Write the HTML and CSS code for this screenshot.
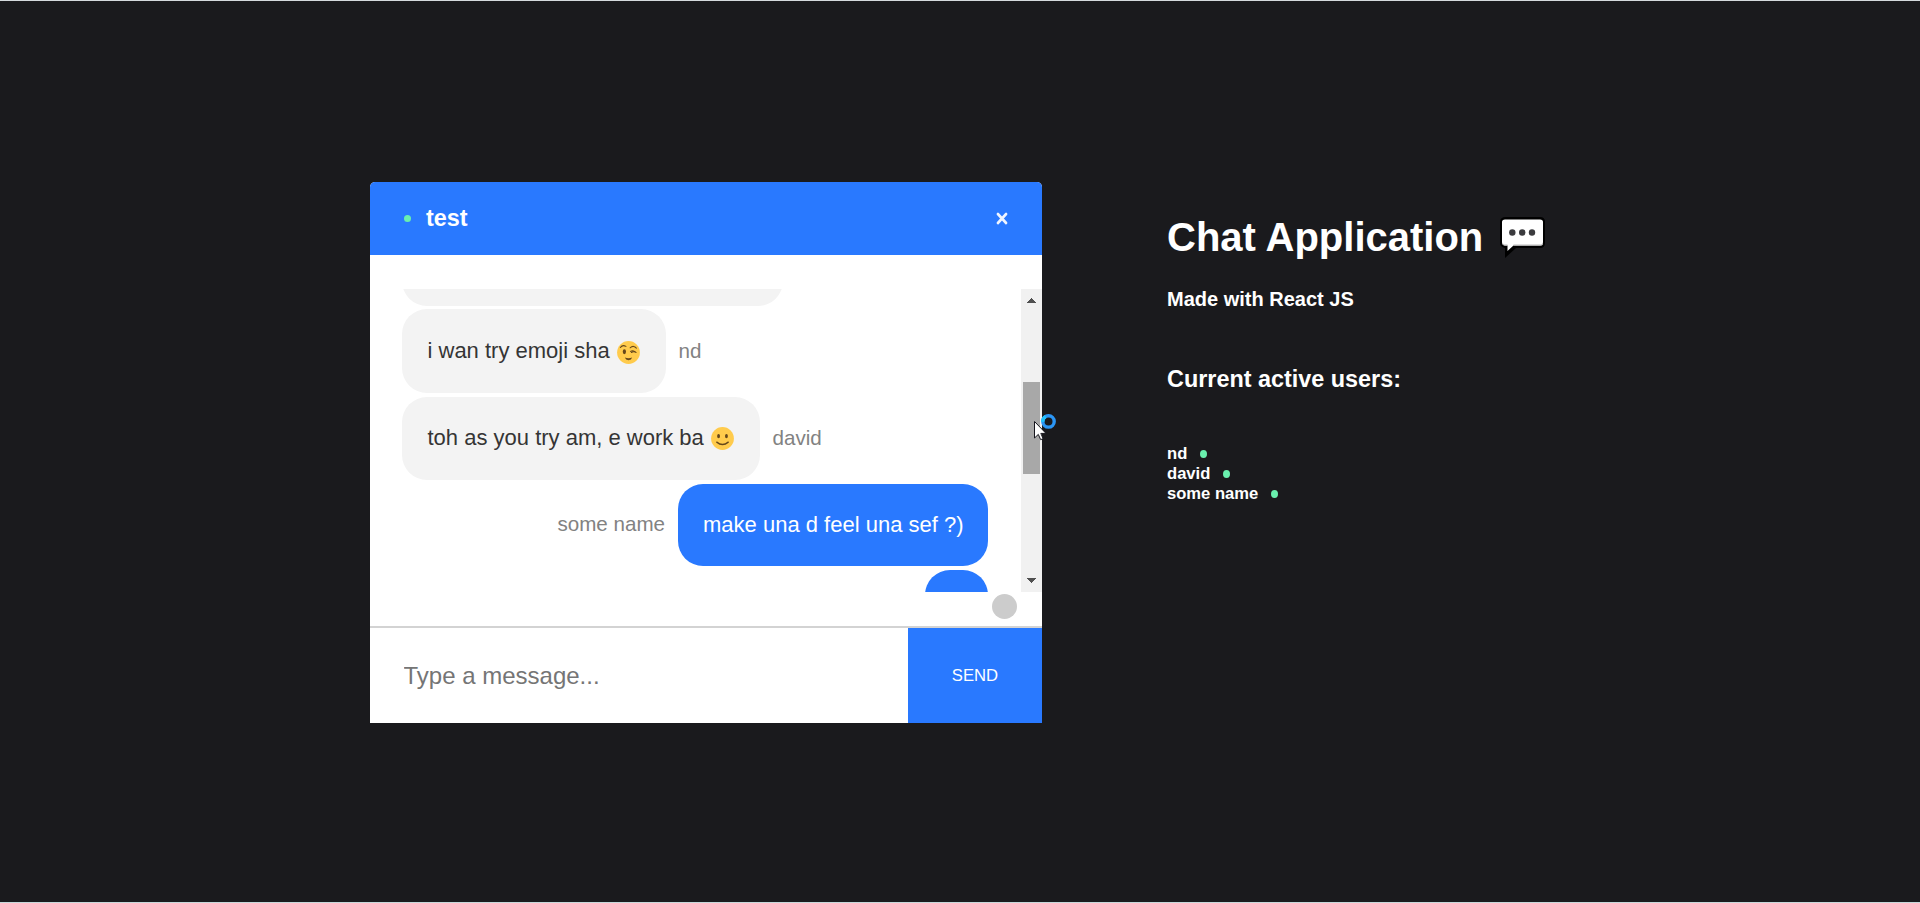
FILE: index.html
```html
<!DOCTYPE html>
<html lang="en">
<head>
<meta charset="utf-8">
<title>Chat Application</title>
<link rel="stylesheet" href="styles.css">
</head>
<body>
<main class="page">
  <section class="chat">
    <header class="bar">
      <i class="dot"></i>
      <h3 class="room">test</h3>
      <svg class="close" width="12" height="13" viewBox="0 0 12 13"><path d="M1.9 2 10.1 11M10.1 2 1.9 11" stroke="#fff" stroke-width="2.6" stroke-linecap="round" opacity=".93"/></svg>
    </header>
    <div class="messages">
      <div class="list">
        <div class="row clipped-top"><div class="bubble first"></div></div>
        <div class="row"><div class="bubble tall"><span>i wan try emoji sha</span>
          <svg class="emoji" viewBox="0 0 24 24"><circle cx="12" cy="12" r="11.9" fill="#ffcb4c"/><ellipse cx="7.7" cy="11.2" rx="1.7" ry="2.5" fill="#65471b"/><path d="M3.5 6.8C5 4.7 7 4.3 9.3 5.6M13.7 7.1C16 4.9 18.6 5.3 20.2 7.4M14 10.8C16 9.8 18.8 10.2 19.9 12M15 12Q17 10.8 19 11.6" fill="none" stroke="#65471b" stroke-width="1.1" stroke-linecap="round"/><path d="M8.2 17.3Q12 18.7 15.8 17.3Q15 19.9 12 20Q9 19.9 8.2 17.3Z" fill="#65471b"/></svg></div><span class="name">nd</span></div>
        <div class="row"><div class="bubble mid"><span>toh as you try am, e work ba</span>
          <svg class="emoji" viewBox="0 0 24 24"><circle cx="12" cy="12" r="11.9" fill="#ffcb4c"/><ellipse cx="7.9" cy="9.5" rx="1.5" ry="2.3" fill="#65471b"/><ellipse cx="16.1" cy="9.5" rx="1.5" ry="2.3" fill="#65471b"/><path d="M6 15.8Q12 20.7 18 15.8" fill="none" stroke="#65471b" stroke-width="1.4" stroke-linecap="round"/></svg></div><span class="name raised">david</span></div>
        <div class="row own"><span class="name">some name</span><div class="bubble mine">make una d feel una sef ?)</div></div>
        <div class="row own"><div class="bubble mine last"></div></div>
      </div>
      <div class="scrollbar">
        <svg width="21" height="21"><path d="M10 9h1v1h1v1h1v1h1v1h1v1H6v-1h1v-1h1v-1h1v-1h1z" fill="#505050"/></svg>
        <div class="thumb"></div>
        <svg width="21" height="21"><path d="M6 7h9v1h-1v1h-1v1h-1v1h-1v1h-1v-1H9v-1H8V9H7V8H6z" fill="#505050"/></svg>
      </div>
    </div>
    <div class="status"><i class="spot"></i></div>
    <form class="compose">
      <input class="field" type="text" placeholder="Type a message...">
      <button class="send" type="button">SEND</button>
    </form>
    <svg class="cursor" width="24" height="28" viewBox="0 0 24 28"><circle cx="14.5" cy="8.4" r="5.7" fill="none" stroke="#2b96f5" stroke-width="3.4"/><path d="M8.8 8.9A5.7 5.7 0 0 1 11.6 3.5" fill="none" stroke="#22c3ff" stroke-width="3.4"/><path d="M.5 8.5V25L4.3 21.4 6.7 26.7 9.1 25.6 6.8 20.4H12Z" fill="#fff" stroke="#16161d"/></svg>
  </section>
  <aside class="info">
    <h1 class="title"><span>Chat Application</span>
      <svg class="speech" width="47" height="43" viewBox="0 0 47 43"><path d="M7 1H41Q46 1 46 6V27Q46 32 41 32H17L6 42V32Q1 31 1 27V6Q1 1 7 1Z" fill="#000"/><path d="M6 3.5H41Q44 3.5 44 6V26Q44 29.5 41 29.5H14.5L8.5 35V29.5H6Q3 29.5 3 26V6Q3 3.5 6 3.5Z" fill="#fff"/><path d="M4 28Q4.8 29.2 6 29.2H8.5M14.5 29.2H41Q43 29.2 43.6 28" fill="none" stroke="#bbb" stroke-width="1.2"/><g fill="#3b3b3e"><circle cx="13.3" cy="16.5" r="3.2"/><circle cx="23.2" cy="16.5" r="3.2"/><circle cx="33" cy="16.5" r="3.2"/></g></svg>
    </h1>
    <h2 class="subtitle">Made with React JS</h2>
    <h3 class="heading">Current active users:</h3>
    <ul class="users">
      <li>nd<i class="dot"></i></li>
      <li>david<i class="dot"></i></li>
      <li>some name<i class="dot"></i></li>
    </ul>
  </aside>
</main>
</body>
</html>
```

FILE: styles.css
```css
* { box-sizing: border-box; }
body { margin: 0; font-family: "Liberation Sans", Arial, sans-serif; }
h1, h2, h3, ul { margin: 0; padding: 0; }
.page { display: flex; align-items: flex-start; height: 903px; padding: 181px 0 0 370px; background: #1a1a1d; border-top: 1px solid #d5dadd; border-bottom: 1px solid #c7d8da; }
.chat { position: relative; display: flex; flex-direction: column; width: 672px; height: 541px; background: #fff; border-radius: 5px 5px 0 0; }
.bar { display: flex; align-items: center; height: 73px; padding: 0 34px; background: #2979ff; border-radius: 5px 5px 0 0; color: #fff; }
.dot { display: block; flex: none; width: 7px; height: 7px; border-radius: 50%; background: #69f0ae; }
.room { margin-left: 15px; font-size: 23.4px; line-height: 27px; }
.close { margin-left: auto; }
.messages { display: flex; height: 303px; margin-top: 34px; }
.list { display: flex; flex-direction: column; flex: 1; gap: 4px; overflow: hidden; padding: 0 33px 0 32px; }
.row { display: flex; flex: none; align-items: center; }
.clipped-top { height: 17px; align-items: flex-end; margin-bottom: -1px; }
.own { justify-content: flex-end; }
.bubble { display: flex; flex: none; align-items: center; height: 82px; padding: 0 26px 0 25.5px; border-radius: 25px; background: #f3f3f3; color: #353535; font-size: 22px; white-space: nowrap; }
.first { width: 381px; height: 83px; }
.tall { width: 264px; height: 84px; }
.mid { width: 358px; height: 83px; padding-bottom: 2px; }
.mine { width: 310px; background: #2979ff; color: #fff; padding: 0 0 0 25px; }
.last { width: 63px; }
.emoji { width: 23px; height: 23px; margin: 3px 0 0 auto; }
.mid .emoji { margin-top: 2px; }
.name { margin: 0 12.5px; color: #828282; font-size: 20.6px; }
.raised { padding-bottom: 2px; }
.own .name { margin-right: 13px; padding-bottom: 2px; }
.scrollbar { display: flex; flex-direction: column; align-items: center; width: 21px; background: #f1f1f1; }
.thumb { width: 17px; height: 92px; margin: 72px 0 auto; background: #a8a8a8; }
.status { display: flex; justify-content: flex-end; height: 34px; padding: 2px 25px 0; }
.spot { width: 25px; height: 25px; border-radius: 50%; background: #ccc; }
.compose { display: flex; height: 97px; margin: 0; border-top: 2px solid #d3d3d3; }
.field { flex: 1; min-width: 0; padding: 0 33.5px; border: 0; background: #fff; font: 24px "Liberation Sans", Arial, sans-serif; }
.field::placeholder { color: #757575; }
.send { width: 134px; padding: 0; border: 0; background: #2979ff; color: #fff; font: 16.67px "Liberation Sans", Arial, sans-serif; }
.cursor { position: absolute; left: 664px; top: 231px; }
.info { margin-left: 125px; padding-top: 32px; color: #fff; }
.title { display: flex; align-items: center; height: 46px; font-size: 40px; white-space: nowrap; }
.speech { margin: 1px 0 0 16px; }
.subtitle { margin-top: 28px; font-size: 20px; line-height: 23px; }
.heading { margin-top: 55px; font-size: 23.4px; line-height: 27px; }
.users { margin-top: 51px; list-style: none; font-size: 16.6px; font-weight: bold; line-height: 20px; }
.users li { display: flex; align-items: center; gap: 13px; }
.users .dot { height: 8px; }
```
